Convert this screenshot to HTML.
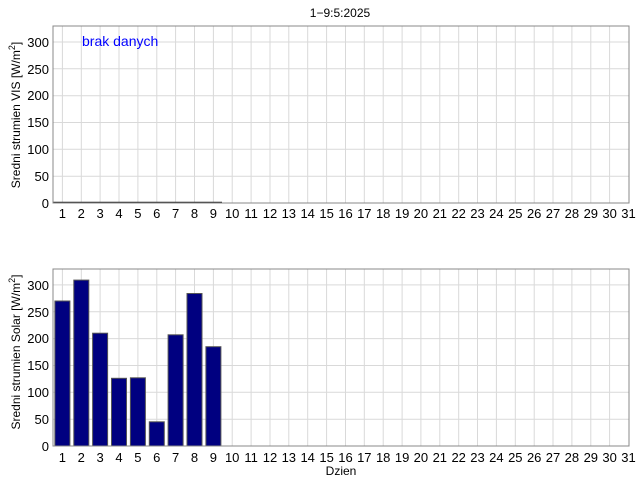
<!DOCTYPE html>
<html><head><meta charset="utf-8"><style>
html,body{margin:0;padding:0;background:#fff;width:640px;height:480px;overflow:hidden}
svg{display:block;font-family:"Liberation Sans",sans-serif;font-size:13px}
</style></head><body>
<svg width="640" height="480" viewBox="0 0 640 480" xmlns="http://www.w3.org/2000/svg">
<rect width="640" height="480" fill="#fff"/>
<text x="340" y="17" text-anchor="middle" font-size="12">1−9:5:2025</text>

<!-- top axes -->
<g stroke="#d9d9d9" stroke-width="1">
<path d="M62.4 26V203M81.3 26V203M100.1 26V203M119 26V203M137.9 26V203M156.8 26V203M175.6 26V203M194.5 26V203M213.4 26V203M232.2 26V203M251.1 26V203M270 26V203M288.8 26V203M307.7 26V203M326.6 26V203M345.5 26V203M364.3 26V203M383.2 26V203M402.1 26V203M420.9 26V203M439.8 26V203M458.7 26V203M477.5 26V203M496.4 26V203M515.3 26V203M534.2 26V203M553 26V203M571.9 26V203M590.8 26V203M609.6 26V203"/>
<path d="M53 176.2H629M53 149.3H629M53 122.5H629M53 95.7H629M53 68.8H629M53 42H629"/>
</g>
<path d="M53 202.5H222" stroke="#222" stroke-width="1.5"/>
<rect x="53" y="26" width="576" height="177" fill="none" stroke="#888" stroke-width="1"/>
<text x="82" y="46" fill="#0000ff" font-size="14">brak danych</text>
<g text-anchor="end">
<text x="49" y="208">0</text><text x="49" y="181">50</text><text x="49" y="154">100</text><text x="49" y="127">150</text><text x="49" y="100">200</text><text x="49" y="74">250</text><text x="49" y="47">300</text>
</g>
<text transform="translate(20,115) rotate(-90)" text-anchor="middle" font-size="12">Sredni strumien VIS [W/m<tspan dy="-5" font-size="9">2</tspan><tspan dy="5">]</tspan></text>
<g text-anchor="middle">
<text x="62.4" y="218">1</text><text x="81.3" y="218">2</text><text x="100.1" y="218">3</text><text x="119" y="218">4</text><text x="137.9" y="218">5</text><text x="156.8" y="218">6</text><text x="175.6" y="218">7</text><text x="194.5" y="218">8</text><text x="213.4" y="218">9</text><text x="232.2" y="218">10</text><text x="251.1" y="218">11</text><text x="270" y="218">12</text><text x="288.8" y="218">13</text><text x="307.7" y="218">14</text><text x="326.6" y="218">15</text><text x="345.5" y="218">16</text><text x="364.3" y="218">17</text><text x="383.2" y="218">18</text><text x="402.1" y="218">19</text><text x="420.9" y="218">20</text><text x="439.8" y="218">21</text><text x="458.7" y="218">22</text><text x="477.5" y="218">23</text><text x="496.4" y="218">24</text><text x="515.3" y="218">25</text><text x="534.2" y="218">26</text><text x="553" y="218">27</text><text x="571.9" y="218">28</text><text x="590.8" y="218">29</text><text x="609.6" y="218">30</text><text x="628.5" y="218">31</text>
</g>

<!-- bottom axes -->
<g stroke="#d9d9d9" stroke-width="1">
<path d="M62.4 269V446M81.3 269V446M100.1 269V446M119 269V446M137.9 269V446M156.8 269V446M175.6 269V446M194.5 269V446M213.4 269V446M232.2 269V446M251.1 269V446M270 269V446M288.8 269V446M307.7 269V446M326.6 269V446M345.5 269V446M364.3 269V446M383.2 269V446M402.1 269V446M420.9 269V446M439.8 269V446M458.7 269V446M477.5 269V446M496.4 269V446M515.3 269V446M534.2 269V446M553 269V446M571.9 269V446M590.8 269V446M609.6 269V446"/>
<path d="M53 419.2H629M53 392.3H629M53 365.5H629M53 338.6H629M53 311.8H629M53 284.9H629"/>
</g>
<g fill="#000080" stroke="#555" stroke-width="1">
<rect x="54.9" y="301" width="15" height="145"/>
<rect x="73.8" y="280.1" width="15" height="165.9"/>
<rect x="92.6" y="333.2" width="15" height="112.8"/>
<rect x="111.5" y="378.3" width="15" height="67.7"/>
<rect x="130.4" y="377.8" width="15" height="68.2"/>
<rect x="149.3" y="421.8" width="15" height="24.2"/>
<rect x="168.1" y="334.8" width="15" height="111.2"/>
<rect x="187" y="293.5" width="15" height="152.5"/>
<rect x="205.9" y="346.7" width="15" height="99.3"/>
</g>
<rect x="53" y="269" width="576" height="177" fill="none" stroke="#888" stroke-width="1"/>
<g text-anchor="end">
<text x="49" y="451">0</text><text x="49" y="424">50</text><text x="49" y="397">100</text><text x="49" y="370">150</text><text x="49" y="343">200</text><text x="49" y="317">250</text><text x="49" y="290">300</text>
</g>
<text transform="translate(20,352) rotate(-90)" text-anchor="middle" font-size="12">Sredni strumien Solar [W/m<tspan dy="-5" font-size="9">2</tspan><tspan dy="5">]</tspan></text>
<g text-anchor="middle">
<text x="62.4" y="462">1</text><text x="81.3" y="462">2</text><text x="100.1" y="462">3</text><text x="119" y="462">4</text><text x="137.9" y="462">5</text><text x="156.8" y="462">6</text><text x="175.6" y="462">7</text><text x="194.5" y="462">8</text><text x="213.4" y="462">9</text><text x="232.2" y="462">10</text><text x="251.1" y="462">11</text><text x="270" y="462">12</text><text x="288.8" y="462">13</text><text x="307.7" y="462">14</text><text x="326.6" y="462">15</text><text x="345.5" y="462">16</text><text x="364.3" y="462">17</text><text x="383.2" y="462">18</text><text x="402.1" y="462">19</text><text x="420.9" y="462">20</text><text x="439.8" y="462">21</text><text x="458.7" y="462">22</text><text x="477.5" y="462">23</text><text x="496.4" y="462">24</text><text x="515.3" y="462">25</text><text x="534.2" y="462">26</text><text x="553" y="462">27</text><text x="571.9" y="462">28</text><text x="590.8" y="462">29</text><text x="609.6" y="462">30</text><text x="628.5" y="462">31</text>
<text x="341" y="475" font-size="12">Dzien</text>
</g>
</svg>
</body></html>
